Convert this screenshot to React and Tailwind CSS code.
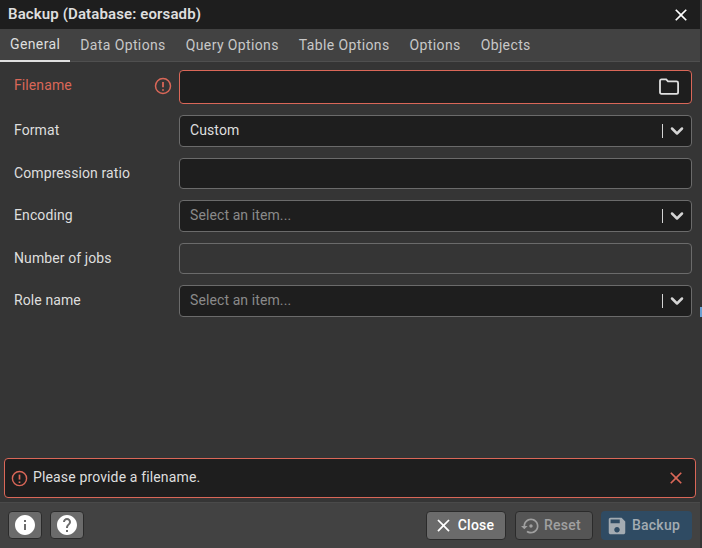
import React from 'react'
import { ChevronDown } from 'lucide-react'

const tabs = ['General', 'Data Options', 'Query Options', 'Table Options', 'Options', 'Objects']

const Mui = ({ d, className }) => (
  <svg viewBox="0 0 24 24" className={className} fill="currentColor">
    <path d={d} />
  </svg>
)

const closePath = 'M19 6.41 17.59 5 12 10.59 6.41 5 5 6.41 10.59 12 5 17.59 6.41 19 12 13.41 17.59 19 19 17.59 13.41 12z'
const infoPath = 'M12 2C6.48 2 2 6.48 2 12s4.48 10 10 10 10-4.48 10-10S17.52 2 12 2zm1 15h-2v-6h2v6zm0-8h-2V7h2v2z'
const helpPath = 'M12 2C6.48 2 2 6.48 2 12s4.48 10 10 10 10-4.48 10-10S17.52 2 12 2zm1 17h-2v-2h2v2zm2.07-7.75l-.9.92C13.45 12.9 13 13.5 13 15h-2v-.5c0-1.1.45-2.1 1.17-2.83l1.24-1.26c.37-.36.59-.86.59-1.41 0-1.1-.9-2-2-2s-2 .9-2 2H8c0-2.21 1.79-4 4-4s4 1.79 4 4c0 .88-.36 1.68-.93 2.25z'
const restorePath = 'M14 12c0-1.1-.9-2-2-2s-2 .9-2 2 .9 2 2 2 2-.9 2-2zm-2-9c-4.97 0-9 4.03-9 9H0l4 4 4-4H5c0-3.87 3.13-7 7-7s7 3.13 7 7-3.13 7-7 7c-1.51 0-2.91-.49-4.06-1.3l-1.42 1.44C8.04 20.3 9.94 21 12 21c4.97 0 9-4.03 9-9s-4.03-9-9-9z'
const savePath = 'M17 3H5c-1.11 0-2 .9-2 2v14c0 1.1.89 2 2 2h14c1.1 0 2-.9 2-2V7l-4-4zm-5 16c-1.66 0-3-1.34-3-3s1.34-3 3-3 3 1.34 3 3-1.34 3-3 3zm3-10H5V5h10v4z'

const AlertIcon = ({ className }) => (
  <svg viewBox="0 0 24 24" className={className} fill="none" stroke="currentColor" strokeWidth="2">
    <circle cx="12" cy="12" r="10" />
    <path d="M12 6.5v7" strokeWidth="2.4" />
    <path d="M12 16.2v2.2" strokeWidth="2.4" />
  </svg>
)

const FolderIcon = () => (
  <svg viewBox="0 0 20 17" className="w-[20px] h-[17px] text-[#e0e0e0]" fill="none" stroke="currentColor" strokeWidth="1.8">
    <path d="M1 3c0-1 .5-1.6 1.5-1.6h4.7L9 3.4h8.500c1 0 1.600.5 1.600 1.500v9.400c0 1-.6 1.600-1.600 1.600h-15C1.500 15.900 1 15.300 1 14.300z" />
  </svg>
)

const Select = ({ value, placeholder }) => (
  <div className="h-[32px] flex items-center bg-[#1e1e1e] border border-[#6b6b6b] rounded pl-[10px] pr-[4px]">
    <span className={`flex-1 pb-[2px] tracking-[0.1px] ${value ? 'text-[#dedede]' : 'text-[#8a8a8a]'}`}>{value || placeholder}</span>
    <span className="w-px h-[14px] bg-[#d4d4d4] mr-[4px]"></span>
    <ChevronDown className="w-[20px] h-[20px] text-[#d4d4d4]" strokeWidth={3} />
  </div>
)

const Row = ({ label, children, error, lift, className }) => (
  <div className={`flex items-center ${className}`}>
    <div className={`w-[179px] pl-[14px] pr-[7px] flex items-center justify-between tracking-[0.1px] ${error ? 'text-[#da6758]' : 'text-[#dedede]'}`}>
      <span className={lift}>{label}</span>
      {error && <AlertIcon className="w-[18px] h-[18px] mb-[2px]" />}
    </div>
    <div className="flex-1">{children}</div>
  </div>
)

export default function App() {
  return (
    <div className="w-[702px] h-[548px] flex bg-[#353535] text-[14px] overflow-hidden" style={{ fontFamily: 'Roboto, sans-serif' }}>
      <div className="w-[700px] h-full flex flex-col bg-[#353535]">
        {/* title */}
        <div className="h-[29px] flex items-center justify-between bg-[#1e1e1e] pl-[8px] pr-[9px]">
          <span className="font-semibold text-[15px] tracking-[0.12px] text-[#dedede]">Backup (Database: eorsadb)</span>
          <Mui d={closePath} className="w-[20px] h-[20px] text-white" />
        </div>

        {/* tabs */}
        <div className="h-[33px] flex bg-[#424242] border-b border-[#4f4f4f]">
          {tabs.map((tab, i) => (
            <div
              key={tab}
              className={`h-[33px] px-[10px] flex items-center tracking-[0.38px] ${i === 0 ? 'text-[#dedede] border-b-2 border-[#e0e0e0]' : 'text-[#c8c8c8]'}`}
            >
              {tab}
            </div>
          ))}
        </div>

        {/* form */}
        <div className="flex-1 flex flex-col pr-[8px] pt-[8px]">
          <Row label="Filename" error lift="pb-[4px]">
            <div className="h-[34px] flex items-center justify-end bg-[#1e1e1e] border border-[#da6758] rounded pr-[12px] pb-[2px]">
              <FolderIcon />
            </div>
          </Row>
          <Row label="Format" lift="pb-[2px]" className="mt-[11px]">
            <Select value="Custom" />
          </Row>
          <Row label="Compression ratio" className="mt-[11px]">
            <div className="h-[31px] bg-[#1e1e1e] border border-[#6b6b6b] rounded"></div>
          </Row>
          <Row label="Encoding" lift="pb-[2px]" className="mt-[11px]">
            <Select placeholder="Select an item..." />
          </Row>
          <Row label="Number of jobs" className="mt-[11px]">
            <div className="h-[31px] bg-[#353535] border border-[#6b6b6b] rounded"></div>
          </Row>
          <Row label="Role name" lift="pb-[2px]" className="mt-[11px]">
            <Select placeholder="Select an item..." />
          </Row>
        </div>

        {/* error message */}
        <div className="mx-[4px] mb-[4px] h-[40px] flex items-center bg-[#1e1e1e] border border-[#da6758] rounded pl-[6px] pr-[13px]">
          <AlertIcon className="w-[17px] h-[17px] text-[#da6758]" />
          <span className="flex-1 ml-[5px] pb-[2px] tracking-[0.14px] text-[#dedede]">Please provide a filename.</span>
          <Mui d={closePath} className="w-[20px] h-[20px] text-[#da6758] -mr-[4px]" />
        </div>

        {/* footer */}
        <div className="h-[46px] flex items-start justify-between bg-[#424242] pt-[8px] px-[8px] border-t border-[#4a4a4a]">
          <div className="flex gap-[8px]">
            <div className="w-[34px] h-[28px] flex items-center justify-center bg-[#6b6b6b] border border-[#2b2b2b] rounded">
              <Mui d={infoPath} className="w-[24px] h-[24px] text-white" />
            </div>
            <div className="w-[34px] h-[28px] flex items-center justify-center bg-[#6b6b6b] border border-[#2b2b2b] rounded">
              <Mui d={helpPath} className="w-[24px] h-[24px] text-white" />
            </div>
          </div>
          <div className="flex">
            <div className="w-[80px] h-[29px] flex items-center justify-center gap-[4px] pr-[5px] bg-[#6b6b6b] border border-[#2b2b2b] rounded text-white font-medium tracking-[0.25px]">
              <Mui d={closePath} className="w-[21px] h-[21px]" />
              Close
            </div>
            <div className="ml-[9px] w-[78px] h-[29px] flex items-center justify-center gap-[3px] pr-[6px] bg-[#555555] border border-[#2b2b2b] rounded text-[#a0a0a0] font-medium tracking-[0.25px]">
              <Mui d={restorePath} className="w-[20px] h-[20px]" />
              Reset
            </div>
            <div className="ml-[8px] w-[91px] h-[29px] flex items-center justify-center gap-[4px] pr-[7px] bg-[#2f4b63] rounded text-[#a3abb2] font-medium tracking-[0.25px]">
              <Mui d={savePath} className="w-[22px] h-[22px]" />
              Backup
            </div>
          </div>
        </div>
      </div>

      {/* window edge */}
      <div className="w-[2px] h-full bg-[#353535]">
        <div className="mt-[307px] h-[10px] bg-[#6a9fd0]"></div>
      </div>
    </div>
  )
}
